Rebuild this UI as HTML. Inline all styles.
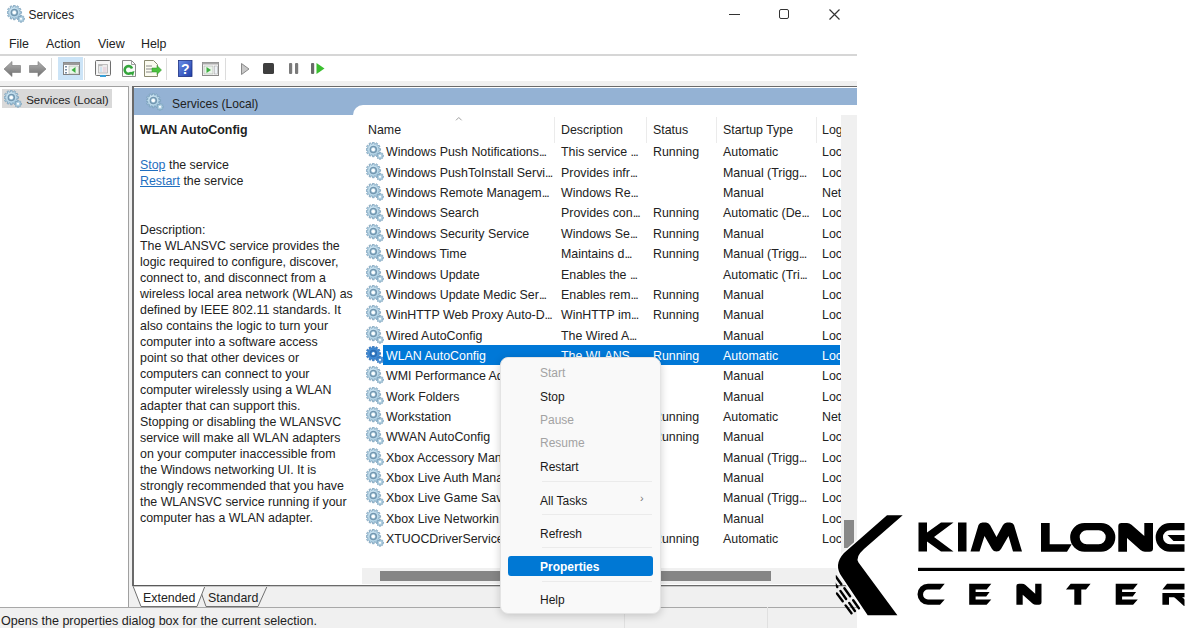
<!DOCTYPE html>
<html><head><meta charset="utf-8">
<style>
*{margin:0;padding:0;box-sizing:border-box}
html,body{width:1200px;height:628px;overflow:hidden;background:#fff;font-family:"Liberation Sans",sans-serif;color:#1a1a1a}
.abs{position:absolute}
.t{position:absolute;white-space:pre;line-height:16px;color:#222}
</style></head><body>
<svg width="0" height="0" style="position:absolute">
<defs>
<symbol id="gear" viewBox="0 0 18 18">
<radialGradient id="ggear" cx="0.45" cy="0.4" r="0.6"><stop offset="0" stop-color="#dcf0fa"/><stop offset="1" stop-color="#a3c8de"/></radialGradient>
<path d="M16.52 13.17 L17.53 13.10 L17.53 14.50 L16.52 14.43 L16.23 15.14 L16.99 15.80 L16.00 16.79 L15.34 16.03 L14.63 16.32 L14.70 17.33 L13.30 17.33 L13.37 16.32 L12.66 16.03 L12.00 16.79 L11.01 15.80 L11.77 15.14 L11.48 14.43 L10.47 14.50 L10.47 13.10 L11.48 13.17 L11.77 12.46 L11.01 11.80 L12.00 10.81 L12.66 11.57 L13.37 11.28 L13.30 10.27 L14.70 10.27 L14.63 11.28 L15.34 11.57 L16.00 10.81 L16.99 11.80 L16.23 12.46Z" fill="#b0d0e2" stroke="#7aa0ba" stroke-width="0.7"/>
<circle cx="14.0" cy="13.8" r="1.1" fill="#fff"/>
<path d="M12.94 6.65 L14.55 6.64 L14.55 8.36 L12.94 8.35 L12.61 9.58 L14.01 10.38 L13.15 11.87 L11.76 11.05 L10.85 11.96 L11.67 13.35 L10.18 14.21 L9.38 12.81 L8.15 13.14 L8.16 14.75 L6.44 14.75 L6.45 13.14 L5.22 12.81 L4.42 14.21 L2.93 13.35 L3.75 11.96 L2.84 11.05 L1.45 11.87 L0.59 10.38 L1.99 9.58 L1.66 8.35 L0.05 8.36 L0.05 6.64 L1.66 6.65 L1.99 5.42 L0.59 4.62 L1.45 3.13 L2.84 3.95 L3.75 3.04 L2.93 1.65 L4.42 0.79 L5.22 2.19 L6.45 1.86 L6.44 0.25 L8.16 0.25 L8.15 1.86 L9.38 2.19 L10.18 0.79 L11.67 1.65 L10.85 3.04 L11.76 3.95 L13.15 3.13 L14.01 4.62 L12.61 5.42Z" fill="url(#ggear)" stroke="#7aa0ba" stroke-width="0.8"/>
<circle cx="7.3" cy="7.5" r="3.0" fill="none" stroke="#7397b0" stroke-width="1.5"/>
<circle cx="7.3" cy="7.5" r="1.5" fill="#fff"/>
</symbol>
<symbol id="gearsel" viewBox="0 0 18 18">

<path d="M16.52 13.17 L17.53 13.10 L17.53 14.50 L16.52 14.43 L16.23 15.14 L16.99 15.80 L16.00 16.79 L15.34 16.03 L14.63 16.32 L14.70 17.33 L13.30 17.33 L13.37 16.32 L12.66 16.03 L12.00 16.79 L11.01 15.80 L11.77 15.14 L11.48 14.43 L10.47 14.50 L10.47 13.10 L11.48 13.17 L11.77 12.46 L11.01 11.80 L12.00 10.81 L12.66 11.57 L13.37 11.28 L13.30 10.27 L14.70 10.27 L14.63 11.28 L15.34 11.57 L16.00 10.81 L16.99 11.80 L16.23 12.46Z" fill="#4a93da" stroke="#2c70b8" stroke-width="0.7"/>
<circle cx="14.0" cy="13.8" r="1.1" fill="#fff"/>
<path d="M12.94 6.65 L14.55 6.64 L14.55 8.36 L12.94 8.35 L12.61 9.58 L14.01 10.38 L13.15 11.87 L11.76 11.05 L10.85 11.96 L11.67 13.35 L10.18 14.21 L9.38 12.81 L8.15 13.14 L8.16 14.75 L6.44 14.75 L6.45 13.14 L5.22 12.81 L4.42 14.21 L2.93 13.35 L3.75 11.96 L2.84 11.05 L1.45 11.87 L0.59 10.38 L1.99 9.58 L1.66 8.35 L0.05 8.36 L0.05 6.64 L1.66 6.65 L1.99 5.42 L0.59 4.62 L1.45 3.13 L2.84 3.95 L3.75 3.04 L2.93 1.65 L4.42 0.79 L5.22 2.19 L6.45 1.86 L6.44 0.25 L8.16 0.25 L8.15 1.86 L9.38 2.19 L10.18 0.79 L11.67 1.65 L10.85 3.04 L11.76 3.95 L13.15 3.13 L14.01 4.62 L12.61 5.42Z" fill="#3f8ad4" stroke="#2c70b8" stroke-width="0.8"/>
<circle cx="7.3" cy="7.5" r="3.0" fill="none" stroke="#2a6cb2" stroke-width="1.5"/>
<circle cx="7.3" cy="7.5" r="1.5" fill="#fff"/>
</symbol>
</defs></svg>

<!-- title bar -->
<svg class="abs" style="left:7px;top:5px" width="18" height="18" viewBox="0 0 18 18"><use href="#gear"/></svg>
<div class="t " style="left:28.5px;top:6.88px;font-size:11.9px;">Services</div>
<div class="abs" style="left:729px;top:14px;width:11px;height:1px;background:#333"></div>
<div class="abs" style="left:779px;top:9px;width:10px;height:10px;border:1.3px solid #333;border-radius:2px"></div>
<svg class="abs" style="left:829px;top:9px" width="11" height="11"><path d="M0.5 0.5L10.5 10.5M10.5 0.5L0.5 10.5" stroke="#333" stroke-width="1.2"/></svg>

<!-- menu -->
<div class="t " style="left:9px;top:35.70px;font-size:12.4px;">File</div><div class="t " style="left:46px;top:35.70px;font-size:12.4px;">Action</div><div class="t " style="left:98px;top:35.70px;font-size:12.4px;">View</div><div class="t " style="left:141px;top:35.70px;font-size:12.4px;">Help</div>
<div class="abs" style="left:0;top:54px;width:857px;height:2px;background:#d6d6d6"></div>


<svg class="abs" style="left:0;top:56px" width="340" height="26" viewBox="0 56 340 26">
<defs>
<linearGradient id="ar" x1="0" y1="0" x2="0" y2="1"><stop offset="0" stop-color="#b4b4b4"/><stop offset="1" stop-color="#6e6e6e"/></linearGradient>
<linearGradient id="hb" x1="0" y1="0" x2="1" y2="1"><stop offset="0" stop-color="#6c8ee8"/><stop offset="1" stop-color="#1f3ea8"/></linearGradient>
</defs>
<!-- back -->
<path d="M4 69 L12 61.5 V65.5 H20.5 V72.5 H12 V76.5Z" fill="url(#ar)" stroke="#777" stroke-width="0.6"/>
<!-- forward -->
<path d="M46 69 L38 61.5 V65.5 H29.5 V72.5 H38 V76.5Z" fill="url(#ar)" stroke="#777" stroke-width="0.6"/>
<rect x="51" y="58" width="1" height="22" fill="#dcdcdc"/>
<!-- selected show/hide tree -->
<rect x="58" y="57" width="25" height="23" fill="#cce4f7"/>
<rect x="63.5" y="62.5" width="16" height="12" fill="#fff" stroke="#808080"/>
<rect x="63.5" y="62.5" width="16" height="2.5" fill="#9a9a9a"/>
<rect x="65" y="66" width="2" height="1.5" fill="#7a8fa6"/><rect x="65" y="69" width="2" height="1.5" fill="#7a8fa6"/><rect x="65" y="72" width="2" height="1.5" fill="#7a8fa6"/>
<rect x="69" y="66" width="9.5" height="8" fill="#eaf6ea" stroke="#9a9a9a" stroke-width="0.5"/>
<path d="M71.5 70 L75.5 67 V73Z" fill="#3cb040"/>
<rect x="84" y="58" width="1" height="22" fill="#dcdcdc"/>
<!-- window icon -->
<rect x="95.5" y="60.5" width="15" height="15" rx="1" fill="#f4f4f4" stroke="#6e6e6e"/>
<rect x="97" y="62.5" width="12" height="11" fill="#f7f7f7"/>
<path d="M98.5 64.5 H107.5 V73 H98.5Z" fill="#ececec" stroke="#a8a8a8" stroke-width="0.7"/>
<rect x="98.5" y="64.5" width="4" height="1.6" fill="#b9b9b9"/>
<rect x="100" y="67" width="2" height="5" fill="#cfe3f0"/><rect x="103" y="67" width="3.5" height="5" fill="#e8d8e0"/>
<rect x="100" y="75" width="6" height="2" fill="#3aa0d8"/>
<!-- refresh doc -->
<path d="M122.5 60.5 H131.5 L135.5 64.5 V76.5 H122.5Z" fill="#fbfbfb" stroke="#8a8a8a"/>
<path d="M131.5 60.5 V64.5 H135.5" fill="none" stroke="#8a8a8a" stroke-width="0.8"/>
<path d="M131.2 72.6 A3.8 3.8 0 1 1 132 68.5" fill="none" stroke="#34a53c" stroke-width="2.6"/>
<path d="M129.5 72.5 L134.5 71 L133 76Z" fill="#34a53c"/>
<!-- export doc -->
<path d="M144.5 60.5 H153.5 L157.5 64.5 V76.5 H144.5Z" fill="#fbfbf0" stroke="#8a8a70"/>
<rect x="146" y="65.5" width="6" height="1" fill="#8a8a8a"/><rect x="146" y="68.5" width="6" height="1" fill="#8a8a8a"/><rect x="146" y="71.5" width="6" height="1" fill="#8a8a8a"/>
<path d="M152 68 H157 V65.5 L161.5 70 L157 74.5 V72 H152Z" fill="#4cc23e" stroke="#2e8f2a" stroke-width="0.5"/>
<rect x="166" y="58" width="1" height="22" fill="#dcdcdc"/>
<!-- help -->
<rect x="178.5" y="60.5" width="13.5" height="16" fill="url(#hb)" stroke="#1b2f80" stroke-width="0.8"/>
<text x="185.2" y="74" font-family="Liberation Sans" font-size="14" font-weight="bold" fill="#fff" text-anchor="middle">?</text>
<!-- window play -->
<rect x="202.5" y="62.5" width="16" height="13" fill="#fafafa" stroke="#8a8a8a"/>
<rect x="202.5" y="62.5" width="16" height="2" fill="#a8a8a8"/>
<rect x="204" y="66" width="9" height="8" fill="#eaf4ea" stroke="#a0a0a0" stroke-width="0.5"/>
<path d="M206.5 67 L211 70 L206.5 73Z" fill="#3cb040"/>
<rect x="214.5" y="66" width="3" height="8" fill="#eef3f8" stroke="#a0a0a0" stroke-width="0.5"/>
<rect x="225" y="58" width="1" height="22" fill="#dcdcdc"/>
<!-- play -->
<path d="M241.5 63.5 L249 69 L241.5 74.5Z" fill="#c8c8c8" stroke="#8a8a8a" stroke-width="1"/>
<!-- stop -->
<rect x="263" y="63" width="11" height="11" rx="1.5" fill="#3e3e3e"/>
<!-- pause -->
<rect x="289" y="63" width="3.2" height="11" rx="1" fill="#7a7a7a"/><rect x="295" y="63" width="3.2" height="11" rx="1" fill="#7a7a7a"/>
<!-- resume -->
<rect x="311" y="63" width="3.2" height="11" rx="1" fill="#6a6a6a"/>
<path d="M316.5 63 L324.5 68.5 L316.5 74Z" fill="#3bbf2f"/>
</svg>

<!-- lower area bg -->
<div class="abs" style="left:0;top:81px;width:857px;height:547px;background:#f0f0f0"></div>

<!-- tree pane -->
<div class="abs" style="left:0;top:86px;width:129px;height:521px;background:#fff;border-top:1px solid #a0a0a0;border-right:1px solid #a0a0a0"></div>
<div class="abs" style="left:2px;top:89px;width:110px;height:19px;background:#d9d9d9"></div>
<svg class="abs" style="left:4px;top:90px" width="18" height="18" viewBox="0 0 18 18"><use href="#gear"/></svg>
<div class="t " style="left:26.2px;top:92.02px;font-size:11.5px;">Services (Local)</div>

<!-- right pane -->
<div class="abs" style="left:132px;top:86px;width:725px;height:500px;background:#fff;border-left:2px solid #6a6a6a;border-top:1px solid #6a6a6a;border-bottom:1px solid #6a6a6a"></div>
<div class="abs" style="left:134px;top:88px;width:723px;height:27px;background:#94b2d4"></div>
<svg class="abs" style="left:146px;top:93px" width="18" height="18" viewBox="0 0 18 18"><use href="#gear"/></svg>
<div class="t " style="left:172px;top:95.52px;font-size:12.05px;">Services (Local)</div>
<div class="abs" style="left:353px;top:105px;width:504px;height:480px;background:#fff;border-top-left-radius:10px"></div>
<div class="t " style="left:140px;top:121.70px;font-size:12.4px;font-weight:bold;">WLAN AutoConfig</div>
<div class="t " style="left:140px;top:156.70px;font-size:12.4px;"><span style="color:#1f6fc0;text-decoration:underline">Stop</span> the service</div>
<div class="t " style="left:140px;top:172.70px;font-size:12.4px;"><span style="color:#1f6fc0;text-decoration:underline">Restart</span> the service</div>

<!-- list header -->
<div class="t " style="left:368px;top:121.90px;font-size:12.4px;">Name</div><div class="t " style="left:561px;top:121.90px;font-size:12.4px;">Description</div><div class="t " style="left:653px;top:121.90px;font-size:12.4px;">Status</div><div class="t " style="left:723px;top:121.90px;font-size:12.4px;">Startup Type</div><div class="t " style="left:822px;top:121.90px;font-size:12.4px;">Log On As</div>
<div class="abs" style="left:554px;top:117px;width:1px;height:26px;background:#ebebeb"></div><div class="abs" style="left:646px;top:117px;width:1px;height:26px;background:#ebebeb"></div><div class="abs" style="left:716px;top:117px;width:1px;height:26px;background:#ebebeb"></div><div class="abs" style="left:816px;top:117px;width:1px;height:26px;background:#ebebeb"></div><svg class="abs" style="left:455px;top:115.5px" width="8" height="6"><path d="M1 4.3 L3.8 1.5 L6.6 4.3" fill="none" stroke="#a0a0a0" stroke-width="1"/></svg>

<svg class="abs" style="left:366px;top:142px" width="18" height="18" viewBox="0 0 18 18"><use href="#gear"/></svg>
<div class="t " style="left:386px;top:144.40px;font-size:12.4px;">Windows Push Notifications<span style="letter-spacing:-1.1px">...</span></div>
<div class="t " style="left:561px;top:144.40px;font-size:12.4px;">This service <span style="letter-spacing:-1.1px">...</span></div>
<div class="t " style="left:653px;top:144.40px;font-size:12.4px;">Running</div>
<div class="t " style="left:723px;top:144.40px;font-size:12.4px;">Automatic</div>
<div class="t " style="left:822px;top:144.40px;font-size:12.4px;">Local</div>
<svg class="abs" style="left:366px;top:163px" width="18" height="18" viewBox="0 0 18 18"><use href="#gear"/></svg>
<div class="t " style="left:386px;top:164.75px;font-size:12.4px;">Windows PushToInstall Servi<span style="letter-spacing:-1.1px">...</span></div>
<div class="t " style="left:561px;top:164.75px;font-size:12.4px;">Provides infr<span style="letter-spacing:-1.1px">...</span></div>
<div class="t " style="left:723px;top:164.75px;font-size:12.4px;">Manual (Trigg<span style="letter-spacing:-1.1px">...</span></div>
<div class="t " style="left:822px;top:164.75px;font-size:12.4px;">Local</div>
<svg class="abs" style="left:366px;top:183px" width="18" height="18" viewBox="0 0 18 18"><use href="#gear"/></svg>
<div class="t " style="left:386px;top:185.10px;font-size:12.4px;">Windows Remote Managem<span style="letter-spacing:-1.1px">...</span></div>
<div class="t " style="left:561px;top:185.10px;font-size:12.4px;">Windows Re<span style="letter-spacing:-1.1px">...</span></div>
<div class="t " style="left:723px;top:185.10px;font-size:12.4px;">Manual</div>
<div class="t " style="left:822px;top:185.10px;font-size:12.4px;">Net</div>
<svg class="abs" style="left:366px;top:204px" width="18" height="18" viewBox="0 0 18 18"><use href="#gear"/></svg>
<div class="t " style="left:386px;top:205.45px;font-size:12.4px;">Windows Search</div>
<div class="t " style="left:561px;top:205.45px;font-size:12.4px;">Provides con<span style="letter-spacing:-1.1px">...</span></div>
<div class="t " style="left:653px;top:205.45px;font-size:12.4px;">Running</div>
<div class="t " style="left:723px;top:205.45px;font-size:12.4px;">Automatic (De<span style="letter-spacing:-1.1px">...</span></div>
<div class="t " style="left:822px;top:205.45px;font-size:12.4px;">Local</div>
<svg class="abs" style="left:366px;top:224px" width="18" height="18" viewBox="0 0 18 18"><use href="#gear"/></svg>
<div class="t " style="left:386px;top:225.80px;font-size:12.4px;">Windows Security Service</div>
<div class="t " style="left:561px;top:225.80px;font-size:12.4px;">Windows Se<span style="letter-spacing:-1.1px">...</span></div>
<div class="t " style="left:653px;top:225.80px;font-size:12.4px;">Running</div>
<div class="t " style="left:723px;top:225.80px;font-size:12.4px;">Manual</div>
<div class="t " style="left:822px;top:225.80px;font-size:12.4px;">Local</div>
<svg class="abs" style="left:366px;top:244px" width="18" height="18" viewBox="0 0 18 18"><use href="#gear"/></svg>
<div class="t " style="left:386px;top:246.15px;font-size:12.4px;">Windows Time</div>
<div class="t " style="left:561px;top:246.15px;font-size:12.4px;">Maintains d<span style="letter-spacing:-1.1px">...</span></div>
<div class="t " style="left:653px;top:246.15px;font-size:12.4px;">Running</div>
<div class="t " style="left:723px;top:246.15px;font-size:12.4px;">Manual (Trigg<span style="letter-spacing:-1.1px">...</span></div>
<div class="t " style="left:822px;top:246.15px;font-size:12.4px;">Local</div>
<svg class="abs" style="left:366px;top:265px" width="18" height="18" viewBox="0 0 18 18"><use href="#gear"/></svg>
<div class="t " style="left:386px;top:266.50px;font-size:12.4px;">Windows Update</div>
<div class="t " style="left:561px;top:266.50px;font-size:12.4px;">Enables the <span style="letter-spacing:-1.1px">...</span></div>
<div class="t " style="left:723px;top:266.50px;font-size:12.4px;">Automatic (Tri<span style="letter-spacing:-1.1px">...</span></div>
<div class="t " style="left:822px;top:266.50px;font-size:12.4px;">Local</div>
<svg class="abs" style="left:366px;top:285px" width="18" height="18" viewBox="0 0 18 18"><use href="#gear"/></svg>
<div class="t " style="left:386px;top:286.85px;font-size:12.4px;">Windows Update Medic Ser<span style="letter-spacing:-1.1px">...</span></div>
<div class="t " style="left:561px;top:286.85px;font-size:12.4px;">Enables rem<span style="letter-spacing:-1.1px">...</span></div>
<div class="t " style="left:653px;top:286.85px;font-size:12.4px;">Running</div>
<div class="t " style="left:723px;top:286.85px;font-size:12.4px;">Manual</div>
<div class="t " style="left:822px;top:286.85px;font-size:12.4px;">Local</div>
<svg class="abs" style="left:366px;top:305px" width="18" height="18" viewBox="0 0 18 18"><use href="#gear"/></svg>
<div class="t " style="left:386px;top:307.20px;font-size:12.4px;">WinHTTP Web Proxy Auto-D<span style="letter-spacing:-1.1px">...</span></div>
<div class="t " style="left:561px;top:307.20px;font-size:12.4px;">WinHTTP im<span style="letter-spacing:-1.1px">...</span></div>
<div class="t " style="left:653px;top:307.20px;font-size:12.4px;">Running</div>
<div class="t " style="left:723px;top:307.20px;font-size:12.4px;">Manual</div>
<div class="t " style="left:822px;top:307.20px;font-size:12.4px;">Local</div>
<svg class="abs" style="left:366px;top:326px" width="18" height="18" viewBox="0 0 18 18"><use href="#gear"/></svg>
<div class="t " style="left:386px;top:327.55px;font-size:12.4px;">Wired AutoConfig</div>
<div class="t " style="left:561px;top:327.55px;font-size:12.4px;">The Wired A<span style="letter-spacing:-1.1px">...</span></div>
<div class="t " style="left:723px;top:327.55px;font-size:12.4px;">Manual</div>
<div class="t " style="left:822px;top:327.55px;font-size:12.4px;">Local</div>
<div class="abs" style="left:383px;top:344.8px;width:457px;height:20px;background:#0078d7"></div>
<svg class="abs" style="left:366px;top:346px" width="18" height="18" viewBox="0 0 18 18"><use href="#gearsel"/></svg>
<div class="t " style="left:386px;top:347.90px;font-size:12.4px;color:#fff;">WLAN AutoConfig</div>
<div class="t " style="left:561px;top:347.90px;font-size:12.4px;color:#fff;">The WLANS<span style="letter-spacing:-1.1px">...</span></div>
<div class="t " style="left:653px;top:347.90px;font-size:12.4px;color:#fff;">Running</div>
<div class="t " style="left:723px;top:347.90px;font-size:12.4px;color:#fff;">Automatic</div>
<div class="t " style="left:822px;top:347.90px;font-size:12.4px;color:#fff;">Local</div>
<svg class="abs" style="left:366px;top:366px" width="18" height="18" viewBox="0 0 18 18"><use href="#gear"/></svg>
<div class="t " style="left:386px;top:368.25px;font-size:12.4px;">WMI Performance Ad<span style="letter-spacing:-1.1px">...</span></div>
<div class="t " style="left:723px;top:368.25px;font-size:12.4px;">Manual</div>
<div class="t " style="left:822px;top:368.25px;font-size:12.4px;">Local</div>
<svg class="abs" style="left:366px;top:387px" width="18" height="18" viewBox="0 0 18 18"><use href="#gear"/></svg>
<div class="t " style="left:386px;top:388.60px;font-size:12.4px;">Work Folders</div>
<div class="t " style="left:723px;top:388.60px;font-size:12.4px;">Manual</div>
<div class="t " style="left:822px;top:388.60px;font-size:12.4px;">Local</div>
<svg class="abs" style="left:366px;top:407px" width="18" height="18" viewBox="0 0 18 18"><use href="#gear"/></svg>
<div class="t " style="left:386px;top:408.95px;font-size:12.4px;">Workstation</div>
<div class="t " style="left:653px;top:408.95px;font-size:12.4px;">Running</div>
<div class="t " style="left:723px;top:408.95px;font-size:12.4px;">Automatic</div>
<div class="t " style="left:822px;top:408.95px;font-size:12.4px;">Net</div>
<svg class="abs" style="left:366px;top:427px" width="18" height="18" viewBox="0 0 18 18"><use href="#gear"/></svg>
<div class="t " style="left:386px;top:429.30px;font-size:12.4px;">WWAN AutoConfig</div>
<div class="t " style="left:653px;top:429.30px;font-size:12.4px;">Running</div>
<div class="t " style="left:723px;top:429.30px;font-size:12.4px;">Manual</div>
<div class="t " style="left:822px;top:429.30px;font-size:12.4px;">Local</div>
<svg class="abs" style="left:366px;top:448px" width="18" height="18" viewBox="0 0 18 18"><use href="#gear"/></svg>
<div class="t " style="left:386px;top:449.65px;font-size:12.4px;">Xbox Accessory Man<span style="letter-spacing:-1.1px">...</span></div>
<div class="t " style="left:723px;top:449.65px;font-size:12.4px;">Manual (Trigg<span style="letter-spacing:-1.1px">...</span></div>
<div class="t " style="left:822px;top:449.65px;font-size:12.4px;">Local</div>
<svg class="abs" style="left:366px;top:468px" width="18" height="18" viewBox="0 0 18 18"><use href="#gear"/></svg>
<div class="t " style="left:386px;top:470.00px;font-size:12.4px;">Xbox Live Auth Mana<span style="letter-spacing:-1.1px">...</span></div>
<div class="t " style="left:723px;top:470.00px;font-size:12.4px;">Manual</div>
<div class="t " style="left:822px;top:470.00px;font-size:12.4px;">Local</div>
<svg class="abs" style="left:366px;top:488px" width="18" height="18" viewBox="0 0 18 18"><use href="#gear"/></svg>
<div class="t " style="left:386px;top:490.35px;font-size:12.4px;">Xbox Live Game Save</div>
<div class="t " style="left:723px;top:490.35px;font-size:12.4px;">Manual (Trigg<span style="letter-spacing:-1.1px">...</span></div>
<div class="t " style="left:822px;top:490.35px;font-size:12.4px;">Local</div>
<svg class="abs" style="left:366px;top:509px" width="18" height="18" viewBox="0 0 18 18"><use href="#gear"/></svg>
<div class="t " style="left:386px;top:510.70px;font-size:12.4px;">Xbox Live Networkin<span style="letter-spacing:-1.1px">...</span></div>
<div class="t " style="left:723px;top:510.70px;font-size:12.4px;">Manual</div>
<div class="t " style="left:822px;top:510.70px;font-size:12.4px;">Local</div>
<svg class="abs" style="left:366px;top:529px" width="18" height="18" viewBox="0 0 18 18"><use href="#gear"/></svg>
<div class="t " style="left:386px;top:531.05px;font-size:12.4px;">XTUOCDriverService</div>
<div class="t " style="left:653px;top:531.05px;font-size:12.4px;">Running</div>
<div class="t " style="left:723px;top:531.05px;font-size:12.4px;">Automatic</div>
<div class="t " style="left:822px;top:531.05px;font-size:12.4px;">Local</div>
<div class="t " style="left:140px;top:221.70px;font-size:12.4px;">Description:</div>
<div class="t " style="left:140px;top:237.73px;font-size:12.4px;">The WLANSVC service provides the</div>
<div class="t " style="left:140px;top:253.76px;font-size:12.4px;">logic required to configure, discover,</div>
<div class="t " style="left:140px;top:269.79px;font-size:12.4px;">connect to, and disconnect from a</div>
<div class="t " style="left:140px;top:285.82px;font-size:12.4px;">wireless local area network (WLAN) as</div>
<div class="t " style="left:140px;top:301.85px;font-size:12.4px;">defined by IEEE 802.11 standards. It</div>
<div class="t " style="left:140px;top:317.88px;font-size:12.4px;">also contains the logic to turn your</div>
<div class="t " style="left:140px;top:333.91px;font-size:12.4px;">computer into a software access</div>
<div class="t " style="left:140px;top:349.94px;font-size:12.4px;">point so that other devices or</div>
<div class="t " style="left:140px;top:365.97px;font-size:12.4px;">computers can connect to your</div>
<div class="t " style="left:140px;top:382.00px;font-size:12.4px;">computer wirelessly using a WLAN</div>
<div class="t " style="left:140px;top:398.03px;font-size:12.4px;">adapter that can support this.</div>
<div class="t " style="left:140px;top:414.06px;font-size:12.4px;">Stopping or disabling the WLANSVC</div>
<div class="t " style="left:140px;top:430.09px;font-size:12.4px;">service will make all WLAN adapters</div>
<div class="t " style="left:140px;top:446.12px;font-size:12.4px;">on your computer inaccessible from</div>
<div class="t " style="left:140px;top:462.15px;font-size:12.4px;">the Windows networking UI. It is</div>
<div class="t " style="left:140px;top:478.18px;font-size:12.4px;">strongly recommended that you have</div>
<div class="t " style="left:140px;top:494.21px;font-size:12.4px;">the WLANSVC service running if your</div>
<div class="t " style="left:140px;top:510.24px;font-size:12.4px;">computer has a WLAN adapter.</div>
<div class="abs" style="left:857px;top:86px;width:343px;height:500px;background:#fff"></div>
<div class="abs" style="left:841px;top:115px;width:16px;height:470px;background:#f0f0f0"></div>
<div class="abs" style="left:844px;top:520px;width:10px;height:28px;background:#888"></div>

<!-- h scrollbar -->
<div class="abs" style="left:362px;top:568px;width:479px;height:16px;background:#f0f0f0"></div>
<div class="abs" style="left:380px;top:571px;width:391px;height:10px;background:#858585"></div>

<!-- tabs -->

<svg class="abs" style="left:128px;top:584px" width="160" height="26" viewBox="128 584 160 26">
<path d="M199 586.5 L206 606.5 H258 L267 586.5" fill="#f0f0f0" stroke="#707070" stroke-width="1"/>
<path d="M133 586 L141 606.5 H197 L205 586" fill="#fff" stroke="#707070" stroke-width="1"/>
<path d="M133 585.5 H270" stroke="#5a5a5a" stroke-width="1.2"/>
</svg>

<div class="t " style="left:143px;top:589.70px;font-size:12.4px;">Extended</div><div class="t " style="left:208px;top:589.70px;font-size:12.4px;">Standard</div>

<!-- status bar -->
<div class="abs" style="left:0;top:606.5px;width:857px;height:1px;background:#a8a8a8"></div><div class="abs" style="left:624px;top:607px;width:1px;height:21px;background:#e0e0e0"></div><div class="abs" style="left:767px;top:607px;width:1px;height:21px;background:#e0e0e0"></div><div class="abs" style="left:134px;top:586px;width:723px;height:1px;background:#c8c8c8"></div>
<div class="t " style="left:1px;top:613.45px;font-size:12.55px;">Opens the properties dialog box for the current selection.</div>

<!-- context menu -->
<div class="abs" style="left:500px;top:357px;width:161px;height:257px;background:#f9f9f9;border-radius:8px;box-shadow:0 2px 8px rgba(0,0,0,0.18);border:1px solid #e4e4e4"></div>
<div class="abs" style="left:508px;top:556px;width:145px;height:20px;background:#0078d4;border-radius:3px"></div>
<div class="t " style="left:540px;top:365.44px;font-size:12.0px;color:#a3a3a3;">Start</div>
<div class="t " style="left:540px;top:389.14px;font-size:12.0px;color:#1a1a1a;">Stop</div>
<div class="t " style="left:540px;top:412.44px;font-size:12.0px;color:#a3a3a3;">Pause</div>
<div class="t " style="left:540px;top:435.44px;font-size:12.0px;color:#a3a3a3;">Resume</div>
<div class="t " style="left:540px;top:459.44px;font-size:12.0px;color:#1a1a1a;">Restart</div>
<div class="t " style="left:540px;top:493.04px;font-size:12.0px;color:#1a1a1a;">All Tasks</div>
<div class="t " style="left:540px;top:526.24px;font-size:12.0px;color:#1a1a1a;">Refresh</div>
<div class="t " style="left:540px;top:592.44px;font-size:12.0px;color:#1a1a1a;">Help</div><div class="t " style="left:640px;top:490.19px;font-size:11px;color:#777;">›</div><div class="t " style="left:540px;top:559.04px;font-size:12.0px;color:#fff;font-weight:bold;">Properties</div><div class="abs" style="left:542px;top:480.8px;width:110px;height:1px;background:#ebebeb"></div><div class="abs" style="left:542px;top:514.0px;width:110px;height:1px;background:#ebebeb"></div><div class="abs" style="left:542px;top:547.0px;width:110px;height:1px;background:#ebebeb"></div><div class="abs" style="left:542px;top:581.0px;width:110px;height:1px;background:#ebebeb"></div>

<svg class="abs" style="left:830px;top:505px" width="360" height="120" viewBox="830 505 360 120">
<defs><clipPath id="lc"><rect x="830" y="505" width="354.5" height="120"/></clipPath></defs>
<g clip-path="url(#lc)" fill="#000">
<!-- chevron -->
<path stroke="#fff" stroke-width="3" paint-order="stroke" d="M887 515.3 H902.7 L864 549 Q855 557 858.5 562.5 L897.4 615.3 H867.7 L842 577 Q833 565 844 553 Z"/>
<!-- hatch -->
<defs><clipPath id="hc"><rect x="835.8" y="560" width="40" height="60"/></clipPath></defs>
<path clip-path="url(#hc)" d="M853.2 600.2L858.9 608.2 M849.2 602.9L854.9 611.0 M845.6 605.4L851.5 613.3 M844.4 588.2L850.1 596.2 M840.4 590.9L846.1 599.0 M836.8 593.4L842.7 601.3 M835.6 576.2L841.3 584.2 M831.6 578.9L837.3 587.0 M828.0 581.4L833.9 589.3" stroke="#000" stroke-width="2.4" stroke-linecap="round" fill="none"/>
<!-- K -->
<path d="M918.5 522.5 H927 V532.5 L941 522.5 H953.5 L934 537 L953.5 551.5 H941 L927 541.5 V551.5 H918.5Z"/>
<!-- I -->
<rect x="958" y="522.5" width="8.5" height="29"/>
<!-- M -->
<path d="M970.5 551.5 L978.5 525 Q979.5 522.5 982.5 522.5 H986 Q988.5 522.5 990 525 L996.5 537 L1003 525 Q1004.5 522.5 1007 522.5 H1010 Q1013 522.5 1014 525 L1022 551.5 H1013 L1008.5 536 L1001 549 Q999.5 551.5 996.5 551.5 Q993.5 551.5 992 549 L984.5 536 L979.5 551.5Z"/>
<!-- L -->
<path d="M1041 523 H1049.7 V544.3 H1071.7 L1067 551.7 H1041Z"/>
<!-- O -->
<path fill-rule="evenodd" d="M1084.5 523 H1101 A14.35 14.35 0 0 1 1101 551.7 H1084.5 A14.35 14.35 0 0 1 1084.5 523Z M1086.7 530.3 H1098.7 A7 7 0 0 1 1098.7 544.3 H1086.7 A7 7 0 0 1 1086.7 530.3Z"/>
<!-- N -->
<path d="M1118.3 551.7 V526 Q1118.3 523 1121.5 523 H1127 Q1129.5 523 1131.5 524.7 L1144.3 536 V523 H1153 V548.5 Q1153 551.7 1149.5 551.7 H1145 Q1142.5 551.7 1140.5 550 L1127 538 V551.7Z"/>
<!-- G -->
<path d="M1170 523 H1190 V530.3 H1170 A7 7 0 0 0 1170 544.3 H1190 V551.7 H1170 A14.35 14.35 0 0 1 1170 523Z"/>
<path d="M1167.5 535 H1190 V541 H1173.5Z"/>
<!-- line -->
<rect x="918" y="567.8" width="270" height="3.2"/>
<!-- C -->
<path d="M928 583.75 H944.7 L940 589.6 H928 A4.95 4.95 0 0 0 928 599.5 H944.7 L940 604.75 H928 A10.5 10.5 0 0 1 928 583.75Z"/>
<!-- E -->
<path d="M969.2 583.75 H991.3 L986.6 589.6 H975.6 V591.9 H989.6 L986.2 596.6 H975.6 V599.5 H991.3 L986.6 604.75 H969.2Z"/>
<!-- N -->
<path d="M1016.4 604.75 V586 Q1016.4 583.75 1019 583.75 H1022 Q1024 583.75 1025.5 585 L1035.2 593.8 V583.75 H1041.5 V602 Q1041.5 604.75 1039 604.75 H1036 Q1034 604.75 1032.5 603.5 L1022.7 594.7 V604.75Z"/>
<!-- T -->
<path d="M1070.7 583.75 H1090.6 L1086 589.6 H1081.3 V604.75 H1074.3 V589.6 H1066Z"/>
<!-- E -->
<path d="M1115.7 583.75 H1137.8 L1133.1 589.6 H1122.1 V591.9 H1136.1 L1132.7 596.6 H1122.1 V599.5 H1137.8 L1133.1 604.75 H1115.7Z"/>
<!-- R -->
<path d="M1167 583.75 H1190 V589.6 H1162.4Z"/>
<path d="M1162.4 592.9 H1190 V597.3 H1169 V604.75 H1162.4Z"/>
<path d="M1174 597 H1182 L1190 604 V606 H1184Z"/>
</g>
</svg>

</body></html>
